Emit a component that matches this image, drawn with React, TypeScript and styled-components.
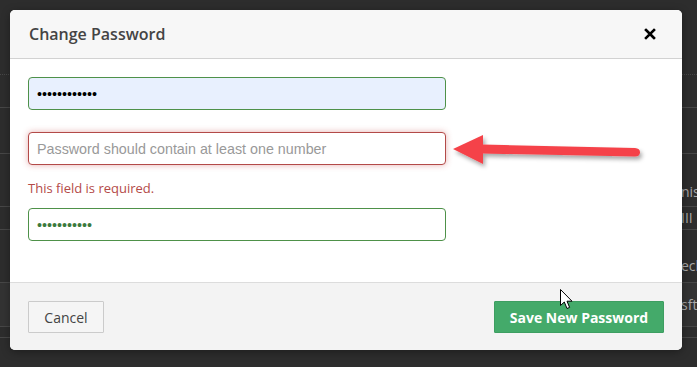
import styled, { createGlobalStyle } from 'styled-components'

const GlobalStyle = createGlobalStyle`
  html, body {
    margin: 0;
    padding: 0;
    background: #2d2d2d;
  }
  * { box-sizing: border-box; }
`

const Page = styled.div`
  position: relative;
  width: 697px;
  height: 367px;
  overflow: hidden;
  background: #2d2d2d;
  font-family: 'Open Sans', 'Liberation Sans', sans-serif;
`

/* the page behind the modal */
const Backdrop = styled.div`
  display: flex;
  flex-direction: column;
`

const BackRow = styled.div<{ $h: number; $line?: 'solid' | 'dotted'; $shade?: boolean; $low?: number }>`
  height: ${(p) => p.$h}px;
  border-bottom: 1px ${(p) => p.$line || 'solid'} #474747;
  background: ${(p) => (p.$shade ? '#333' : 'transparent')};
  display: flex;
  align-items: ${(p) => (p.$low ? 'flex-end' : 'center')};
  padding-bottom: ${(p) => p.$low || 0}px;
  padding-left: 681px;
  color: #a8a8a8;
  font-size: 14px;
  line-height: 18px;
  white-space: nowrap;
  overflow: hidden;
`

const Modal = styled.div`
  position: absolute;
  top: 10px;
  left: 10px;
  width: 672px;
  height: 340px;
  background: #fff;
  border-radius: 5px;
  overflow: hidden;
  display: flex;
  flex-direction: column;
  box-shadow: 0 2px 8px rgba(0, 0, 0, 0.35);
`

const Header = styled.div`
  height: 49px;
  flex-shrink: 0;
  background: #f7f7f7;
  border-bottom: 1px solid #d2d2d2;
  display: flex;
  align-items: center;
  padding: 0 26px 0 19px;
`

const Title = styled.h4`
  margin: 0;
  font-size: 16px;
  font-weight: 600;
  color: #444;
`

const Close = styled.button`
  margin-left: auto;
  border: none;
  background: none;
  padding: 0;
  width: 12px;
  height: 12px;
  display: flex;
  cursor: pointer;
`

const Body = styled.div`
  flex: 1;
  padding: 18px 18px 0;
  display: flex;
  flex-direction: column;
`

const Input = styled.input<{ $state: 'ok' | 'error'; $autofill?: boolean }>`
  width: 418px;
  height: 33px;
  padding: 0 8px;
  border-radius: 4px;
  border: 1px solid ${(p) => (p.$state === 'error' ? '#b34a48' : '#4e9149')};
  background: ${(p) => (p.$autofill ? '#e8f0fe' : '#fff')};
  color: ${(p) => (p.$autofill ? '#000' : '#3c7a3d')};
  font-family: 'Liberation Sans', Arial, sans-serif;
  font-size: 14.3px;
  outline: none;
  box-shadow: ${(p) => (p.$state === 'error' ? '0 0 6px rgba(200, 80, 80, 0.45)' : 'none')};
  &::placeholder {
    color: #999;
  }
`

const ErrorText = styled.div`
  margin: 14px 0 11px;
  font-size: 13px;
  line-height: 18px;
  color: #b44a48;
`

const Footer = styled.div`
  height: 68px;
  flex-shrink: 0;
  background: #f3f3f3;
  border-top: 1px solid #dcdcdc;
  display: flex;
  align-items: center;
  justify-content: space-between;
  padding: 0 18px;
`

const Button = styled.button<{ $primary?: boolean }>`
  height: 32px;
  margin-top: 1px;
  padding: 0;
  border-radius: 1px;
  white-space: nowrap;
  font-family: 'Open Sans', 'Liberation Sans', sans-serif;
  font-size: 14px;
  font-weight: ${(p) => (p.$primary ? 700 : 400)};
  color: ${(p) => (p.$primary ? '#fff' : '#444')};
  background: ${(p) => (p.$primary ? '#44aa6a' : '#f5f5f5')};
  border: 1px solid ${(p) => (p.$primary ? '#3d9e61' : '#cbcbcb')};
  width: ${(p) => (p.$primary ? '170px' : '76px')};
  cursor: pointer;
`

const Overlay = styled.svg<{ $x: number; $y: number }>`
  position: absolute;
  left: ${(p) => p.$x}px;
  top: ${(p) => p.$y}px;
  overflow: visible;
  pointer-events: none;
`

export default function App() {
  return (
    <>
      <GlobalStyle />
      <Page>
        <Backdrop>
          <BackRow $h={75} $line="dotted" />
          <BackRow $h={33} />
          <BackRow $h={46} />
          <BackRow $h={53} $low={5}>nis</BackRow>
          <BackRow $h={23}>III</BackRow>
          <BackRow $h={53} $low={7}>ech</BackRow>
          <BackRow $h={44} $shade>sfte</BackRow>
          <BackRow $h={11} />
        </Backdrop>

        <Modal>
          <Header>
            <Title>Change Password</Title>
            <Close aria-label="Close">
              <svg width="12" height="12" viewBox="0 0 12 12">
                <path d="M2 2L10 10M10 2L2 10" stroke="#000" strokeWidth="2.6" strokeLinecap="square" />
              </svg>
            </Close>
          </Header>
          <Body>
            <Input type="password" $state="ok" $autofill defaultValue="abcdefghijkl" />
            <Input
              type="password"
              $state="error"
              placeholder="Password should contain at least one number"
              style={{ marginTop: 22 }}
            />
            <ErrorText>This field is required.</ErrorText>
            <Input type="password" $state="ok" defaultValue="abcdefghijk" />
          </Body>
          <Footer>
            <Button>Cancel</Button>
            <Button $primary>Save New Password</Button>
          </Footer>
        </Modal>

        {/* annotation arrow */}
        <Overlay $x={450} $y={130} width="200" height="40" viewBox="0 0 200 40">
          <defs>
            <filter id="sh" x="-10%" y="-50%" width="130%" height="200%">
              <feDropShadow dx="2" dy="3" stdDeviation="2" floodColor="#000" floodOpacity="0.35" />
            </filter>
          </defs>
          <g filter="url(#sh)" fill="#f5434a">
            <path d="M32 14.5 L185 18 Q190 18.3 190 22.3 Q190 26.5 185 26.5 L32 23.5 Z" />
            <path d="M3 19 L33 5 L33 34 Z" />
          </g>
        </Overlay>

        {/* mouse pointer */}
        <Overlay $x={560} $y={289} width="14" height="22" viewBox="0 0 14 22">
          <path
            d="M0.5 0.5 L0.5 16.5 L4.3 13 L7 19.5 L9.6 18.4 L7 12.2 L12 12.2 Z"
            fill="#fff"
            stroke="#000"
            strokeWidth="1"
            strokeLinejoin="round"
          />
        </Overlay>
      </Page>
    </>
  )
}
